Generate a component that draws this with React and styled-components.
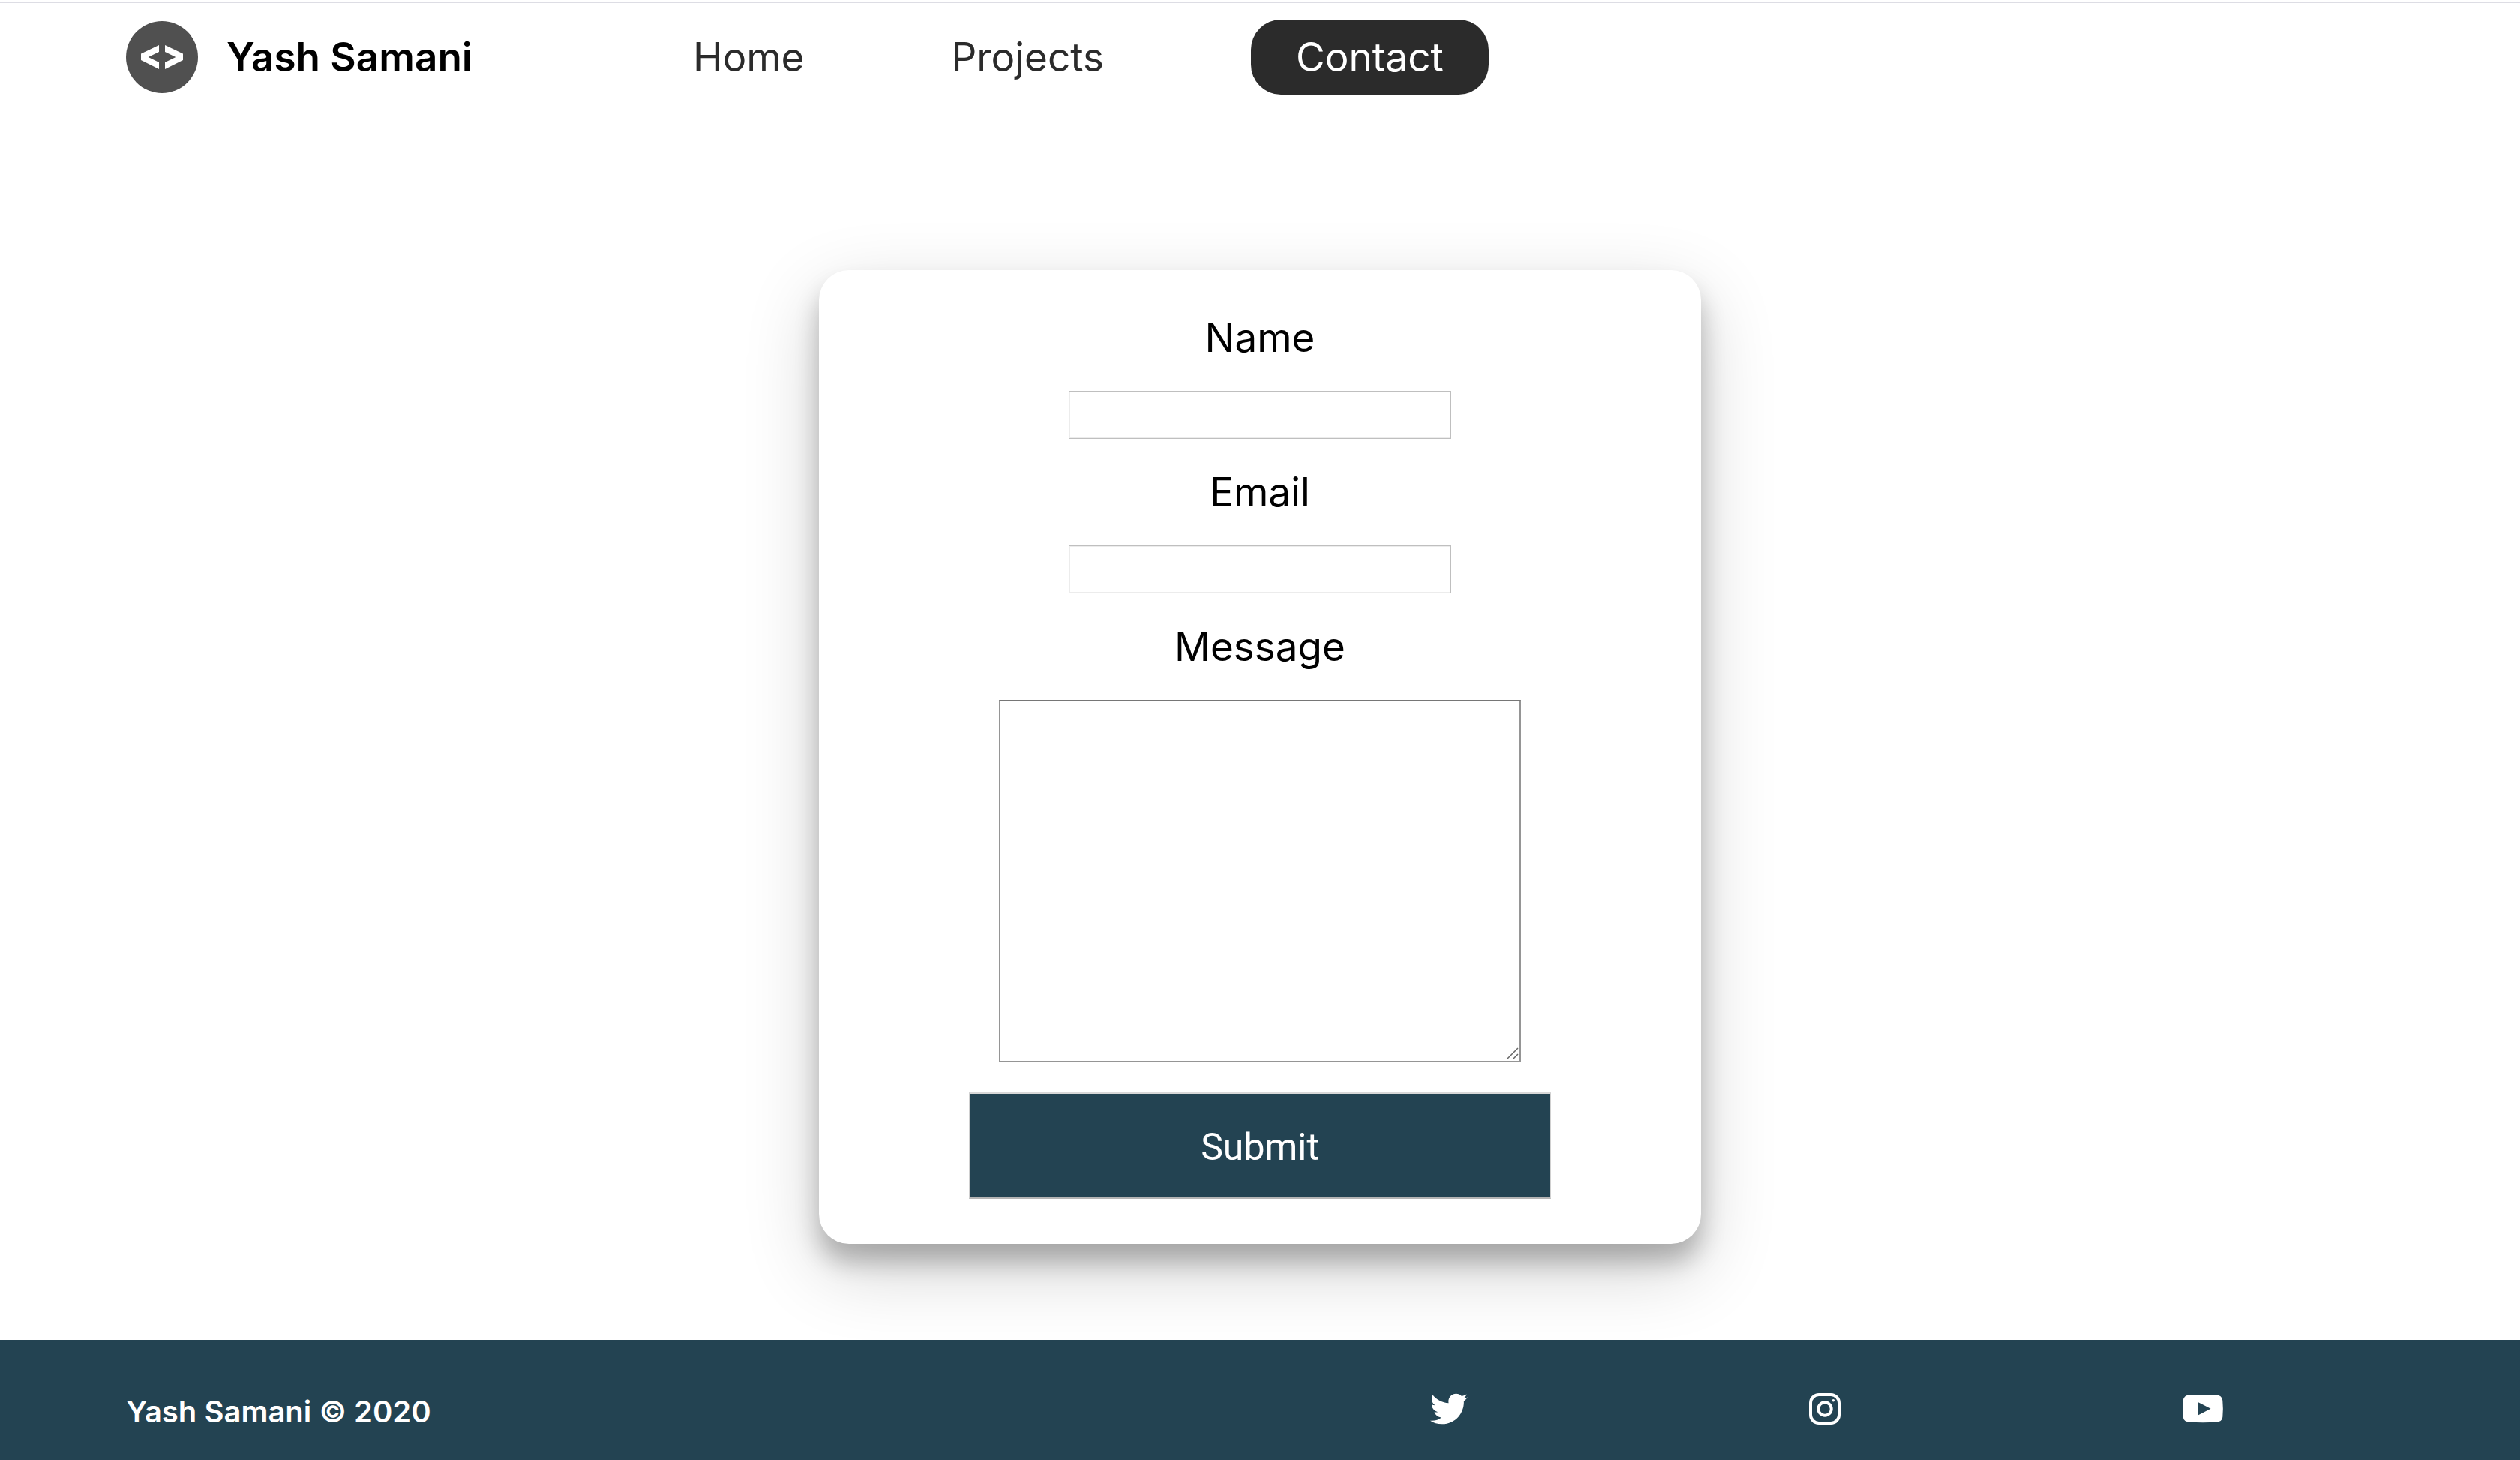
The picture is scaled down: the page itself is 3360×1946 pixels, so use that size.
import React from "react";
import styled, { createGlobalStyle } from "styled-components";
import { FaTwitter } from "react-icons/fa";

const slate = "#234352";
const charcoal = "#2b2b2b";

const GlobalStyle = createGlobalStyle`
  *, *::before, *::after { box-sizing: border-box; }
  body {
    margin: 0;
    background: #fff;
    color: #000;
    font-family: Inter, "Open Sans", sans-serif;
    font-size: 50px;
  }
`;

const Page = styled.div`
  display: flex;
  flex-direction: column;
  min-height: 100vh;
  padding-top: 2px;
`;

const Header = styled.header`
  display: flex;
  align-items: center;
  padding: 22px 5%;
  border-top: 2px solid #dddde4;
`;

const Brand = styled.a`
  display: flex;
  align-items: center;
  gap: 38px;
  width: 25%;
  color: #000;
  font-size: 53px;
  font-weight: 600;
  line-height: 60px;
  white-space: nowrap;
  text-decoration: none;
`;

const Logo = styled.svg`
  flex: none;
  width: 96px;
  height: 96px;
`;

const Nav = styled.nav`
  display: flex;
  align-items: center;
  gap: 196px;
`;

const NavLink = styled.a`
  padding: ${(p) => (p.$active ? "20px 60px" : "20px 0")};
  border-radius: 40px;
  background: ${(p) => (p.$active ? charcoal : "transparent")};
  color: ${(p) => (p.$active ? "#fff" : charcoal)};
  font-size: 53px;
  line-height: 60px;
  text-decoration: none;
`;

const Main = styled.main`
  display: flex;
  flex: 1;
  justify-content: center;
  align-items: flex-start;
  padding: 212px 0 128px;
`;

const Card = styled.form`
  display: flex;
  flex-direction: column;
  align-items: center;
  gap: 40px;
  width: 35%;
  padding: 59px 0 60px;
  border-radius: 40px;
  background: #fff;
  box-shadow: 0 24px 32px rgba(0, 0, 0, 0.24), 0 34px 100px rgba(0, 0, 0, 0.19);
`;

const Label = styled.label`
  font-size: 53px;
  line-height: 62px;
`;

const TextInput = styled.input`
  width: 510px;
  height: 64px;
  padding: 2px 8px;
  border: 1px solid #bfbfbf;
  outline: 1px solid #ececec;
  outline-offset: -2px;
  background: #fff;
  font: inherit;
  font-size: 40px;
`;

const MessageBox = styled.div`
  position: relative;
  display: flex;
`;

const TextArea = styled.textarea`
  width: 696px;
  height: 483px;
  padding: 4px 8px;
  border: 2px solid #959595;
  border-top-color: #767676;
  background: #fff;
  font: inherit;
  font-size: 40px;
  resize: both;

  &::-webkit-resizer {
    background: transparent;
  }
`;

const Grip = styled.svg`
  position: absolute;
  right: 3px;
  bottom: 3px;
  width: 17px;
  height: 17px;
  pointer-events: none;
`;

const Submit = styled.button`
  width: 66%;
  height: 142px;
  padding: 4px 0 0;
  border: 2px solid #d0d0d0;
  border-top-color: #d8d8d8;
  border-bottom-color: #b4b4b4;
  background: ${slate};
  color: #fff;
  font-family: Roboto, "Liberation Sans", sans-serif;
  font-size: 50px;
`;

const Footer = styled.footer`
  display: grid;
  grid-template-columns: 1fr 1fr;
  align-items: start;
  padding: 66px 5% 34px;
  background: ${slate};
  color: #fff;
`;

const Copyright = styled.p`
  margin: 0;
  font-size: 40px;
  font-weight: 600;
  line-height: 60px;
`;

const Social = styled.div`
  display: flex;
  justify-content: space-around;
`;

const SocialLink = styled.a`
  display: flex;
  align-items: center;
  height: 52px;
  color: #fff;

  svg {
    display: block;
  }
`;

const fields = [
  { id: "name", label: "Name", type: "text" },
  { id: "email", label: "Email", type: "email" },
];

const pages = [
  { label: "Home" },
  { label: "Projects" },
  { label: "Contact", active: true },
];

function InstagramIcon() {
  return (
    <svg width="44" height="44" viewBox="0 0 44 44" aria-hidden="true">
      <rect x="3" y="3" width="38" height="38" rx="11" fill="none" stroke="currentColor" strokeWidth="4" />
      <circle cx="22" cy="22" r="8.7" fill="none" stroke="currentColor" strokeWidth="4" />
      <circle cx="33.3" cy="10.7" r="1.8" fill="currentColor" />
    </svg>
  );
}

function YoutubeIcon() {
  return (
    <svg width="56" height="40" viewBox="0 0 56 40" aria-hidden="true">
      <path
        fill="currentColor"
        fillRule="evenodd"
        d="M10 1.6Q28 .4 46 1.6Q53.600 2 54.300 9Q55.400 20 54.300 31Q53.600 37.200 46 37.600Q28 38.800 10 37.600Q2.400 37.200 1.700 31Q.600 20 1.700 9Q2.400 2 10 1.600ZM21 10.700V28.700L38.500 19.700Z"
      />
    </svg>
  );
}

export default function App() {
  return (
    <Page>
      <GlobalStyle />
      <Header>
        <Brand href="#">
          <Logo viewBox="0 0 96 96" aria-hidden="true">
            <circle cx="48" cy="48" r="48" fill="#505050" />
            <path
              fill="#fff"
              d="M44 32L20 43.500V52L44 64V55L29.700 48L44 41ZM52 32L76 43.500V52L52 64V55L66.300 48L52 41Z"
            />
          </Logo>
          Yash Samani
        </Brand>
        <Nav>
          {pages.map((page) => (
            <NavLink key={page.label} href="#" $active={page.active}>
              {page.label}
            </NavLink>
          ))}
        </Nav>
      </Header>
      <Main>
        <Card>
          {fields.map((field) => (
            <React.Fragment key={field.id}>
              <Label htmlFor={field.id}>{field.label}</Label>
              <TextInput id={field.id} name={field.id} type={field.type} />
            </React.Fragment>
          ))}
          <Label htmlFor="message">Message</Label>
          <MessageBox>
            <TextArea id="message" name="message" />
            <Grip viewBox="0 0 17 17" aria-hidden="true">
              <path d="M1 16L16 1M9 16L16 9" stroke="#666" strokeWidth="1.5" fill="none" />
            </Grip>
          </MessageBox>
          <Submit type="submit">Submit</Submit>
        </Card>
      </Main>
      <Footer>
        <Copyright>Yash Samani © 2020</Copyright>
        <Social>
          <SocialLink href="#" aria-label="Twitter">
            <FaTwitter size={50} />
          </SocialLink>
          <SocialLink href="#" aria-label="Instagram">
            <InstagramIcon />
          </SocialLink>
          <SocialLink href="#" aria-label="YouTube">
            <YoutubeIcon />
          </SocialLink>
        </Social>
      </Footer>
    </Page>
  );
}
